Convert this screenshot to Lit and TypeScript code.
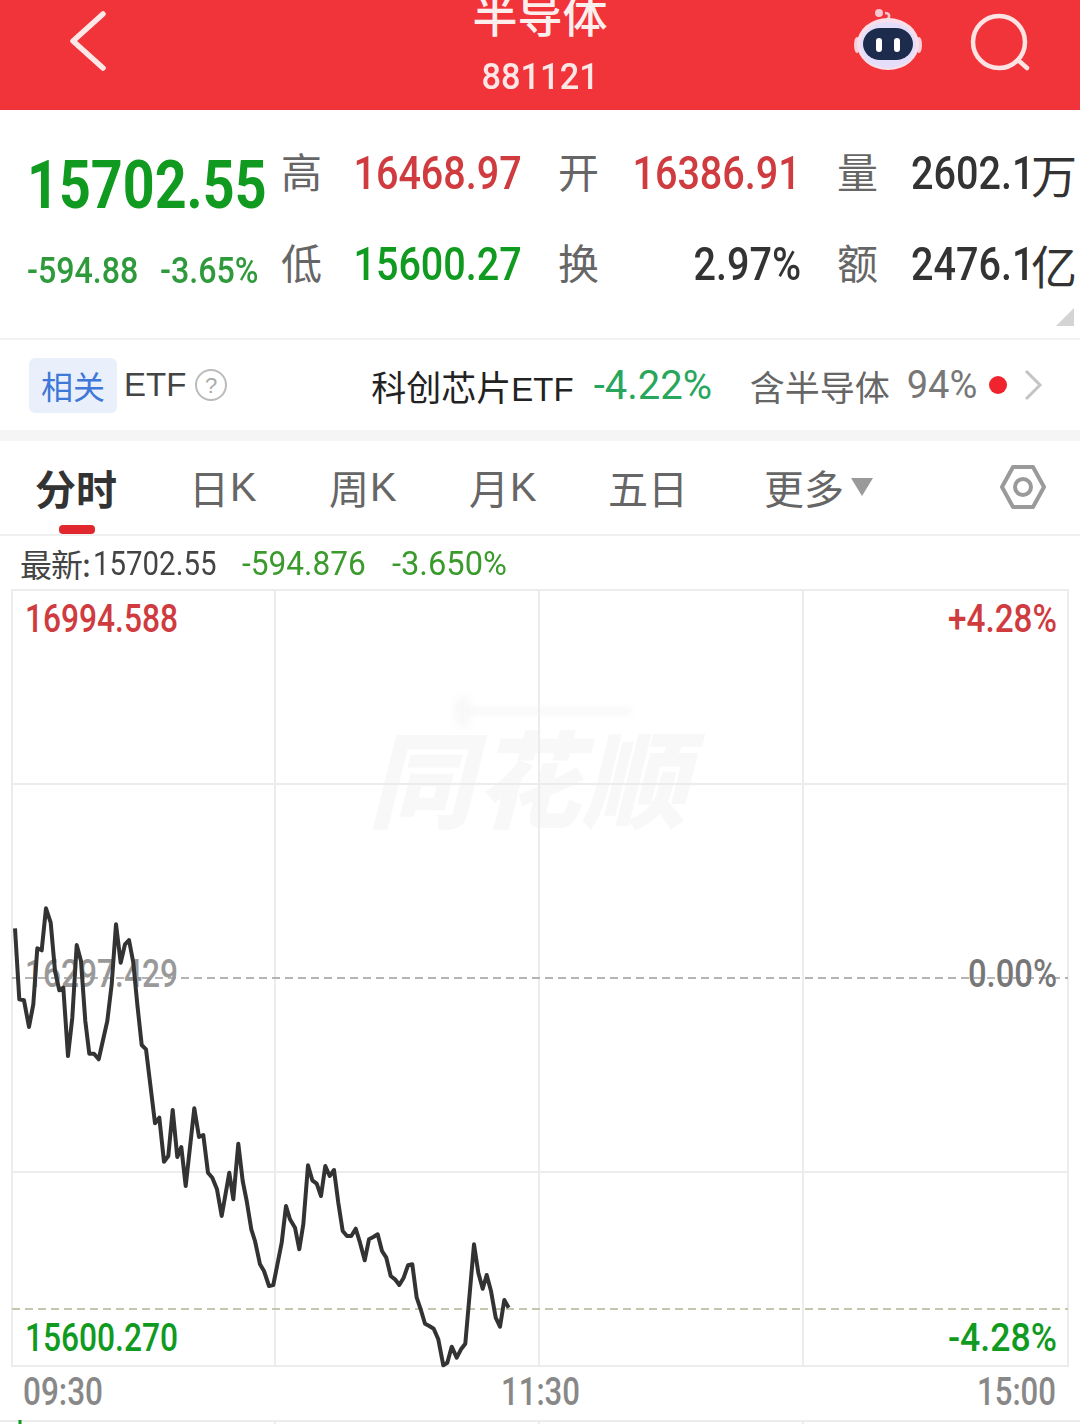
import { LitElement, html, css } from "lit";
import { customElement } from "lit/decorators.js";

const z3: number[][] = [[45,112],[58,325],[72,328],[87,408],[100,340],[112,172],[125,178],[138,52],[152,95],[165,240],[178,298],[190,290],[204,495],[217,380],[230,162],[243,210],[256,390],[268,488],[282,488],[296,505],[322,390],[335,280],[348,100],[362,215],[375,160],[387,147],[400,215],[412,340],[425,462],[438,475],[465,697],[478,680],[492,812],[505,795],[518,657],[532,798],[544,768],[557,885],[583,652],[597,738],[610,732],[624,845],[637,860],[651,895],[665,975],[688,845],[700,925]];
const z4: number[][] = [[25,38],[38,150],[50,210],[64,295],[75,330],[90,400],[102,420],[117,465],[130,462],[155,335],[168,225],[180,265],[195,290],[208,355],[220,280],[234,103],[247,148],[260,158],[273,195],[286,105],[299,135],[312,117],[325,215],[338,300],[351,315],[364,315],[377,293],[390,335],[404,388],[417,325],[430,318],[443,310],[456,360],[469,380],[482,435],[495,445],[508,462],[521,440],[534,403],[547,400],[560,500],[572,535],[585,578],[598,585],[611,593],[625,625],[640,703],[652,695],[665,647],[680,680],[693,655],[706,638],[732,340],[745,425],[758,473],[770,432],[783,480],[797,560],[810,587],[823,507],[836,530]];
const linePts = [
  ...z3.map(([x, y]) => `${(x / 3).toFixed(1)},${(890 + y / 3).toFixed(1)}`),
  ...z4.map(([x, y]) => `${(230 + x / 3).toFixed(1)},${(1130 + y / 3).toFixed(1)}`),
].join(" ");

@customElement("app-root")
export class AppRoot extends LitElement {
  static styles = css`
    :host { display: block; width: 1080px; height: 1424px; overflow: hidden; background: #fff;
      font-family: "Roboto", "Noto Sans CJK SC", sans-serif; color: #333; }

    .header { height: 110px; background: #f1333a; display: grid; grid-template-columns: 1fr auto 1fr; overflow: hidden; color: #fff; }
    .back { padding: 11px 0 0 68px; }
    .back svg, .head-icons svg { display: block; }
    .title { display: flex; flex-direction: column; align-items: center; margin-top: -11px; }
    .title .name { font-size: 45px; line-height: 50px; font-weight: 500; font-family: "Noto Sans CJK SC", sans-serif; color: #fdeeee; }
    .title .code { font-size: 37px; line-height: 44px; margin-top: 16px; font-weight: 500; color: #fde6e6; display: inline-block; transform: scaleX(.93); }
    .head-icons { display: flex; justify-content: flex-end; gap: 46px; padding: 8px 50px 0 0; align-items: flex-start; }

    .quote { height: 230px; display: flex; border-bottom: 2px solid #f2f2f2; box-sizing: border-box; position: relative; }
    .last { width: 281px; flex: none; padding: 37px 0 0 27px; box-sizing: border-box; }
    .price { font-size: 66px; line-height: 78px; color: #109a1f; font-weight: 700; transform: scaleX(.843); transform-origin: left; white-space: nowrap; }
    .chg { display: flex; margin-top: 26px; font-size: 37px; line-height: 40px; font-weight: 500; color: #2f9a3c; white-space: nowrap; }
    .chg span { display: block; transform: scaleX(.87); transform-origin: left; }
    .chg span:first-child { width: 133px; }
    .stats { display: grid; grid-template-columns: 75px 202px 75px 204px 74px 1fr; grid-auto-rows: 91px; padding-top: 17px; align-items: center; height: fit-content; }
    .lab { font-family: "Noto Sans CJK SC", sans-serif; font-size: 41px; color: #666; line-height: 46px; padding-bottom: 6px; }
    .val { font-size: 46px; line-height: 50px; font-weight: 500; white-space: nowrap; display: flex; justify-content: flex-end; padding-right: 36px; }
    .val .n { display: block; flex: none; transform: scaleX(.86); transform-origin: right; }
    .val.r { color: #cf3b3f; }
    .val.g { color: #109a1f; }
    .val.k { color: #333; }
    .val.last-col { justify-content: flex-start; padding: 0; }
    .val.last-col .n { width: 120px; transform-origin: left; }
    .val .u { font-family: "Noto Sans CJK SC", sans-serif; font-weight: 400; font-size: 46px; }
    .corner { position: absolute; right: 6px; bottom: 12px; }

    .etf { height: 90px; display: flex; align-items: center; padding-left: 29px; font-size: 35px; white-space: nowrap; }
    .tag { width: 88px; height: 55px; background: #e9f0fb; border-radius: 6px; color: #3f78d8; font-family: "Noto Sans CJK SC", sans-serif; font-size: 32px; display: flex; align-items: center; justify-content: center; }
    .e1 { font-family: "Liberation Sans", sans-serif; font-size: 33px; color: #444; margin-left: 7px; }
    .q { margin-left: 8px; display: block; }
    .etf .name { margin-left: 143px; color: #222; font-family: "Noto Sans CJK SC", sans-serif; font-size: 35px; }
    .etf .name b { font-weight: 400; font-family: "Liberation Sans", sans-serif; font-size: 33px; }
    .pct { margin-left: 20px; width: 120px; color: #28a65c; font-size: 40px; }
    .inc { margin-left: 36px; color: #666; font-family: "Noto Sans CJK SC", sans-serif; font-size: 35px; }
    .p94 { margin-left: 17px; color: #777; font-size: 38px; }
    .dot { width: 18px; height: 18px; border-radius: 50%; background: #f0242f; margin-left: 12px; }
    .chev { margin-left: 16px; display: block; }

    .gap { height: 11px; background: #f5f5f5; }

    .tabs { height: 95px; box-sizing: border-box; border-bottom: 2px solid #f0f0f0; display: grid; grid-template-columns: 154px 140px 140px 139px 156px 1fr; padding-left: 35px; align-items: start; }
    .tab { font-size: 40px; color: #666; line-height: 50px; padding-top: 21px; display: flex; align-items: center; font-family: "Noto Sans CJK SC", sans-serif; white-space: nowrap; }
    .tab .k { font-family: "Liberation Sans", sans-serif; font-size: 40px; margin-left: 1px; }
    .tab.on { font-size: 41px; font-weight: 700; color: #333; position: relative; height: 93px; box-sizing: border-box; align-items: flex-start; }
    .tab.on::after { content: ""; position: absolute; left: 24px; bottom: 0; width: 36px; height: 9px; border-radius: 4px; background: #e0282e; }
    .more { justify-content: space-between; padding-right: 34px; }
    .more .l { display: flex; align-items: center; gap: 7px; }

    .latest { height: 53px; display: flex; align-items: center; padding-left: 20px; font-size: 34px; white-space: nowrap; }
    .a { display: flex; align-items: center; width: 196px; flex: none; font-family: "Noto Sans CJK SC", sans-serif; font-size: 32px; color: #444; }
    .a .h { width: 73px; flex: none; letter-spacing: -1px; }
    .a i { font-style: normal; font-family: "Roboto", sans-serif; font-size: 34px; display: block; transform: scaleX(.865); transform-origin: left; }
    .g1, .g2 { color: #3a9a2c; display: block; transform-origin: left; }
    .g1 { margin-left: 26px; width: 125px; flex: none; transform: scaleX(.93); }
    .g2 { margin-left: 25px; transform: scaleX(.96); }

    .chart { position: relative; height: 836px; }
    .chart svg { display: block; position: relative; }
    .chart text { font-size: 38px; font-weight: 500; font-family: "Roboto", sans-serif; }
    .wm { position: absolute; left: 368px; top: 120px; font-family: "Noto Sans CJK SC", sans-serif; font-weight: 900; font-style: italic; font-size: 105px; line-height: 130px; color: #f8f8f8; letter-spacing: 2px; white-space: nowrap; }
    .smear { position: absolute; left: 455px; top: 119px; width: 177px; height: 6px; background: #f7f7f7; filter: blur(3px); }
    .smear2 { position: absolute; left: 456px; top: 108px; width: 14px; height: 30px; background: #f8f8f8; filter: blur(4px); }
  `;

  private lab(t: string) { return html`<div class="lab">${t}</div>`; }

  render() {
    return html`
      <div class="header">
        <div class="back">
          <svg width="40" height="60" viewBox="0 0 40 60"><path d="M35 3 L5 30 L35 57" fill="none" stroke="#fde8e8" stroke-width="5.5" stroke-linecap="round" stroke-linejoin="round"/></svg>
        </div>
        <div class="title"><div class="name">半导体</div><div class="code">881121</div></div>
        <div class="head-icons">
          <svg width="70" height="66" viewBox="0 0 70 66">
            <path d="M33 12 C37 8 35 5 31 5" fill="none" stroke="#f7c7d2" stroke-width="2.5"/>
            <circle cx="25" cy="5" r="4" fill="#f7c7d2"/>
            <ellipse cx="3" cy="37" rx="3" ry="8" fill="#f7cfdc"/>
            <ellipse cx="65" cy="37" rx="3" ry="8" fill="#f7cfdc"/>
            <ellipse cx="34" cy="36" rx="31" ry="26" fill="#fadfe8"/>
            <ellipse cx="34" cy="37" rx="28" ry="23" fill="#e4defa"/>
            <rect x="9" y="20" width="50" height="32" rx="17" fill="#1d2b4d"/>
            <rect x="22" y="30" width="6" height="14" rx="3" fill="#fff"/>
            <rect x="40" y="30" width="6" height="14" rx="3" fill="#fff"/>
          </svg>
          <svg width="60" height="66" viewBox="0 0 60 66">
            <circle cx="29" cy="34" r="26" fill="none" stroke="#fde3e3" stroke-width="4.5"/>
            <path d="M48 52 L57 60" stroke="#fde3e3" stroke-width="4.5" stroke-linecap="round"/>
          </svg>
        </div>
      </div>

      <div class="quote">
        <div class="last">
          <div class="price">15702.55</div>
          <div class="chg"><span>-594.88</span><span>-3.65%</span></div>
        </div>
        <div class="stats">
          ${this.lab("高")}<div class="val r"><span class="n">16468.97</span></div>
          ${this.lab("开")}<div class="val r"><span class="n">16386.91</span></div>
          ${this.lab("量")}<div class="val k last-col"><span class="n">2602.1</span><span class="u">万</span></div>
          ${this.lab("低")}<div class="val g"><span class="n">15600.27</span></div>
          ${this.lab("换")}<div class="val k"><span class="n">2.97%</span></div>
          ${this.lab("额")}<div class="val k last-col"><span class="n">2476.1</span><span class="u">亿</span></div>
        </div>
        <svg class="corner" width="18" height="18" viewBox="0 0 18 18"><path d="M18 0 V18 H0 Z" fill="#d4d4d4"/></svg>
      </div>

      <div class="etf">
        <div class="tag">相关</div>
        <span class="e1">ETF</span>
        <svg class="q" width="34" height="34" viewBox="0 0 34 34"><circle cx="17" cy="17" r="15" fill="none" stroke="#bbb" stroke-width="2"/><text x="17" y="25" text-anchor="middle" font-size="22" fill="#aaa" font-family="Liberation Sans">?</text></svg>
        <span class="name">科创芯片<b>ETF</b></span>
        <span class="pct">-4.22%</span>
        <span class="inc">含半导体</span>
        <span class="p94">94%</span>
        <span class="dot"></span>
        <svg class="chev" width="20" height="32" viewBox="0 0 20 32"><path d="M3 2 L17 16 L3 30" fill="none" stroke="#c4c4c4" stroke-width="3"/></svg>
      </div>

      <div class="gap"></div>

      <div class="tabs">
        <div class="tab on">分时</div>
        <div class="tab">日<span class="k">K</span></div>
        <div class="tab">周<span class="k">K</span></div>
        <div class="tab">月<span class="k">K</span></div>
        <div class="tab">五日</div>
        <div class="tab more">
          <span class="l">更多<svg width="22" height="18" viewBox="0 0 22 18"><path d="M0 0 H22 L11 18 Z" fill="#9a9a9a"/></svg></span>
          <svg width="46" height="48" viewBox="0 0 46 48"><path d="M13 4 H33 L44 24 L33 44 H13 L2 24 Z" fill="none" stroke="#9a9a9a" stroke-width="4" stroke-linejoin="round"/><circle cx="23" cy="24" r="8" fill="none" stroke="#9a9a9a" stroke-width="4"/></svg>
        </div>
      </div>

      <div class="latest">
        <span class="a"><span class="h">最新:</span><i>15702.55</i></span>
        <span class="g1">-594.876</span>
        <span class="g2">-3.650%</span>
      </div>

      <div class="chart">
        <div class="wm">同花顺</div>
        <div class="smear"></div>
        <div class="smear2"></div>
        <svg width="1080" height="836" viewBox="0 588 1080 836">
          <g fill="none" stroke="#ececec" stroke-width="2">
            <path d="M12 589 H1068 V1365 H12 Z"/>
            <path d="M275 589 V1365 M539 589 V1365 M803 589 V1365"/>
            <path d="M12 783 H1068 M12 1171 H1068"/>
            <path d="M0 1420 H1080 M275 1420 V1424 M539 1420 V1424 M803 1420 V1424"/>
          </g>
          <path d="M12 977 H1068" stroke="#b4b4b4" stroke-width="2" stroke-dasharray="8 5" fill="none"/>
          <path d="M12 1308 H1068" stroke="#c2c8ae" stroke-width="2" stroke-dasharray="8 5" fill="none"/>
          <path d="M20 1419 V1424" stroke="#109a1f" stroke-width="3"/>
          <text x="25" y="631" fill="#cf3b3f" textLength="153" lengthAdjust="spacingAndGlyphs">16994.588</text>
          <text x="948" y="631" fill="#cf3b3f" textLength="109" lengthAdjust="spacingAndGlyphs">+4.28%</text>
          <text x="25" y="986" fill="#999" textLength="153" lengthAdjust="spacingAndGlyphs">16297.429</text>
          <text x="968" y="986" fill="#777" textLength="89" lengthAdjust="spacingAndGlyphs">0.00%</text>
          <text x="25" y="1350" fill="#109a1f" textLength="153" lengthAdjust="spacingAndGlyphs">15600.270</text>
          <text x="948" y="1350" fill="#109a1f" textLength="109" lengthAdjust="spacingAndGlyphs">-4.28%</text>
          <text x="23" y="1404" fill="#888" textLength="80" lengthAdjust="spacingAndGlyphs">09:30</text>
          <text x="501" y="1404" fill="#888" textLength="79" lengthAdjust="spacingAndGlyphs">11:30</text>
          <text x="977" y="1404" fill="#888" textLength="79" lengthAdjust="spacingAndGlyphs">15:00</text>
          <polyline points="${linePts}" fill="none" stroke="#333" stroke-width="4" stroke-linejoin="round"/>
        </svg>
      </div>
    `;
  }
}
